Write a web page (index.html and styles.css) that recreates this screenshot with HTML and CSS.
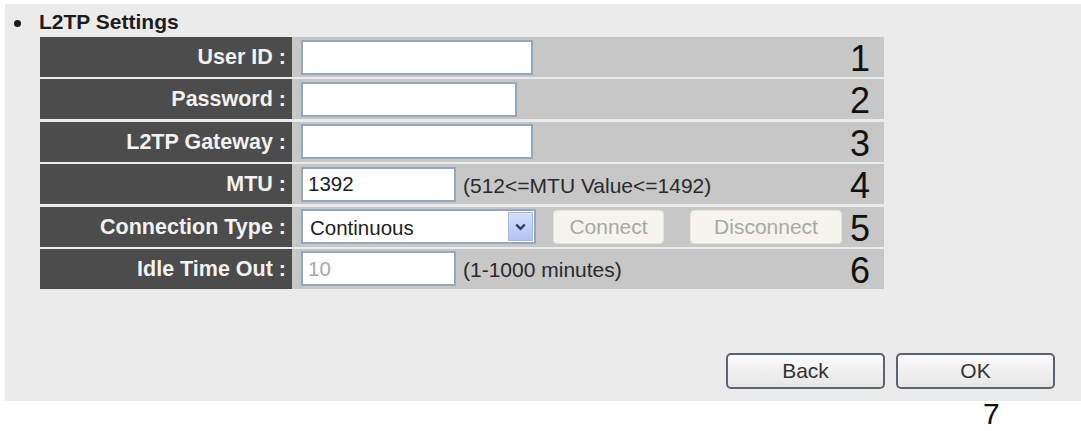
FILE: index.html
```html
<!DOCTYPE html>
<html lang="en">
  <head>
    <meta charset="UTF-8" />
    <meta name="viewport" content="width=device-width, initial-scale=1.0" />
    <title>L2TP Settings</title>
    <link rel="stylesheet" href="styles.css">
  </head>
  <body>
    <div class="panel">
      <div class="title"><span class="dot"></span>L2TP Settings</div>

      <form class="settings" action="">
        <div class="row">
          <label class="key" for="userId">User ID :</label>
          <div class="val">
            <input type="text" id="userId" class="field field-lg" autocomplete="off">
            <span class="num">1</span>
          </div>
        </div>

        <div class="row">
          <label class="key" for="password">Password :</label>
          <div class="val">
            <input type="password" id="password" class="field field-md" autocomplete="off">
            <span class="num">2</span>
          </div>
        </div>

        <div class="row">
          <label class="key" for="gateway">L2TP Gateway :</label>
          <div class="val">
            <input type="text" id="gateway" class="field field-lg" autocomplete="off">
            <span class="num">3</span>
          </div>
        </div>

        <div class="row">
          <label class="key" for="mtu">MTU :</label>
          <div class="val">
            <input type="text" id="mtu" class="field field-sm" value="1392">
            <span class="hint">(512&lt;=MTU Value&lt;=1492)</span>
            <span class="num">4</span>
          </div>
        </div>

        <div class="row">
          <label class="key" for="connType">Connection Type :</label>
          <div class="val">
            <div class="select-wrap">
              <select id="connType" class="select">
                <option>Continuous</option>
                <option>Connect On Demand</option>
                <option>Manual</option>
              </select>
              <span class="select-arrow">
                <svg width="11" height="8" viewBox="0 0 11 8"><path d="M1.2 1.5 L5.5 5.8 L9.8 1.5" fill="none" stroke="#263a78" stroke-width="2.4"/></svg>
              </span>
            </div>
            <button type="button" class="btn-off btn-connect" disabled>Connect</button>
            <button type="button" class="btn-off btn-disconnect" disabled>Disconnect</button>
            <span class="num">5</span>
          </div>
        </div>

        <div class="row">
          <label class="key" for="idle">Idle Time Out :</label>
          <div class="val">
            <input type="text" id="idle" class="field field-sm field-off" value="10" disabled>
            <span class="hint">(1-1000 minutes)</span>
            <span class="num">6</span>
          </div>
        </div>
      </form>

      <div class="actions">
        <button type="button" class="btn">Back</button>
        <button type="submit" class="btn">OK</button>
      </div>
    </div>
    <div class="note">7</div>
  </body>
</html>
```

FILE: styles.css
```css
* {
  margin: 0;
  padding: 0;
  box-sizing: border-box;
}

:root {
  --row-height: 40px;
  --key-bg: #4c4c4c;
  --val-bg: #c7c7c7;
  --field-border: #93a7bf;
}

body {
  font-family: "Liberation Sans", Arial, sans-serif;
  background: #fff;
  color: #222;
  width: 1081px;
  height: 431px;
  overflow: hidden;
}

/* grey page area, the white strip under it holds the "7" */
.panel {
  position: relative;
  z-index: 0;
  margin: 4px 0 0 5px;
  height: 397px;
  background: #ebebeb;
  padding-top: 6px;
  display: flex;
  flex-direction: column;
}

.title {
  display: flex;
  align-items: center;
  height: 24px;
  margin-bottom: 3px;
  padding-left: 9px;
  font-size: 21px;
  font-weight: bold;
  color: #1c1c1c;
}

.dot {
  width: 7px;
  height: 7px;
  border-radius: 50%;
  background: #1c1c1c;
  margin: 2px 18px 0 0;
}

.settings {
  margin-left: 35px;
  width: 844px;
  display: grid;
  row-gap: 2.4px;
}

.row {
  display: grid;
  grid-template-columns: 252px 1fr;
  height: var(--row-height);
}

.key {
  background: var(--key-bg);
  color: #f2f2f2;
  font-size: 21.5px;
  font-weight: bold;
  text-align: right;
  line-height: var(--row-height);
  padding-right: 6px;
  white-space: nowrap;
}

.val {
  background: var(--val-bg);
  display: flex;
  align-items: center;
  padding: 0 14px 0 9px;
  font-size: 21px;
}

/* annotation digits sit low in the row */
.num {
  margin-left: auto;
  align-self: flex-end;
  font-size: 36px;
  line-height: 36px;
  color: #111;
}

.field {
  height: 35px;
  border: 2px solid var(--field-border);
  background: #fff;
  font-family: inherit;
  font-size: 20.5px;
  color: #222;
  padding: 0 5px;
  outline: none;
}

.field-lg { width: 232px; }
.field-md { width: 216px; }
.field-sm { width: 155px; }

.field-off {
  color: #a8a8a8;
  background: #fff;
}

.hint {
  margin: 3px 0 0 7px;
  color: #2a2a2a;
  white-space: nowrap;
}

.select-wrap {
  position: relative;
  width: 235px;
  height: 35px;
}

.select {
  appearance: none;
  -webkit-appearance: none;
  width: 100%;
  height: 100%;
  border: 2px solid var(--field-border);
  background: #fff;
  font-family: inherit;
  font-size: 20.5px;
  color: #222;
  padding: 2px 0 0 7px;
  outline: none;
}

/* the dropdown button drawn over the select */
.select-arrow {
  position: absolute;
  top: 3px;
  right: 3px;
  width: 25px;
  height: 29px;
  display: flex;
  align-items: center;
  justify-content: center;
  background: linear-gradient(#d6e0fc, #b3c3f3);
  border: 1px solid #a7b8ea;
  pointer-events: none;
}

.btn-off {
  height: 34px;
  border: 1px solid #e4e4da;
  border-radius: 4px;
  background: #f5f5ee;
  color: #a9a9a2;
  font-family: inherit;
  font-size: 21px;
}

.btn-connect {
  width: 111px;
  margin-left: 17px;
}

.btn-disconnect {
  width: 152px;
  margin-left: 26px;
}

.actions {
  margin-top: auto;
  display: flex;
  justify-content: flex-end;
  gap: 11px;
  padding: 0 26px 12px 0;
}

.btn {
  width: 159px;
  height: 36px;
  border: 2px solid #5b646e;
  border-radius: 5px;
  background: linear-gradient(#fbfbfb, #e6e6e6);
  color: #333;
  font-family: inherit;
  font-size: 21px;
}

/* the reference digit is clipped by the window; keep it just inside */
.note {
  margin: -4px 0 0 983px;
  font-size: 30px;
  line-height: 33px;
  color: #111;
}
```
